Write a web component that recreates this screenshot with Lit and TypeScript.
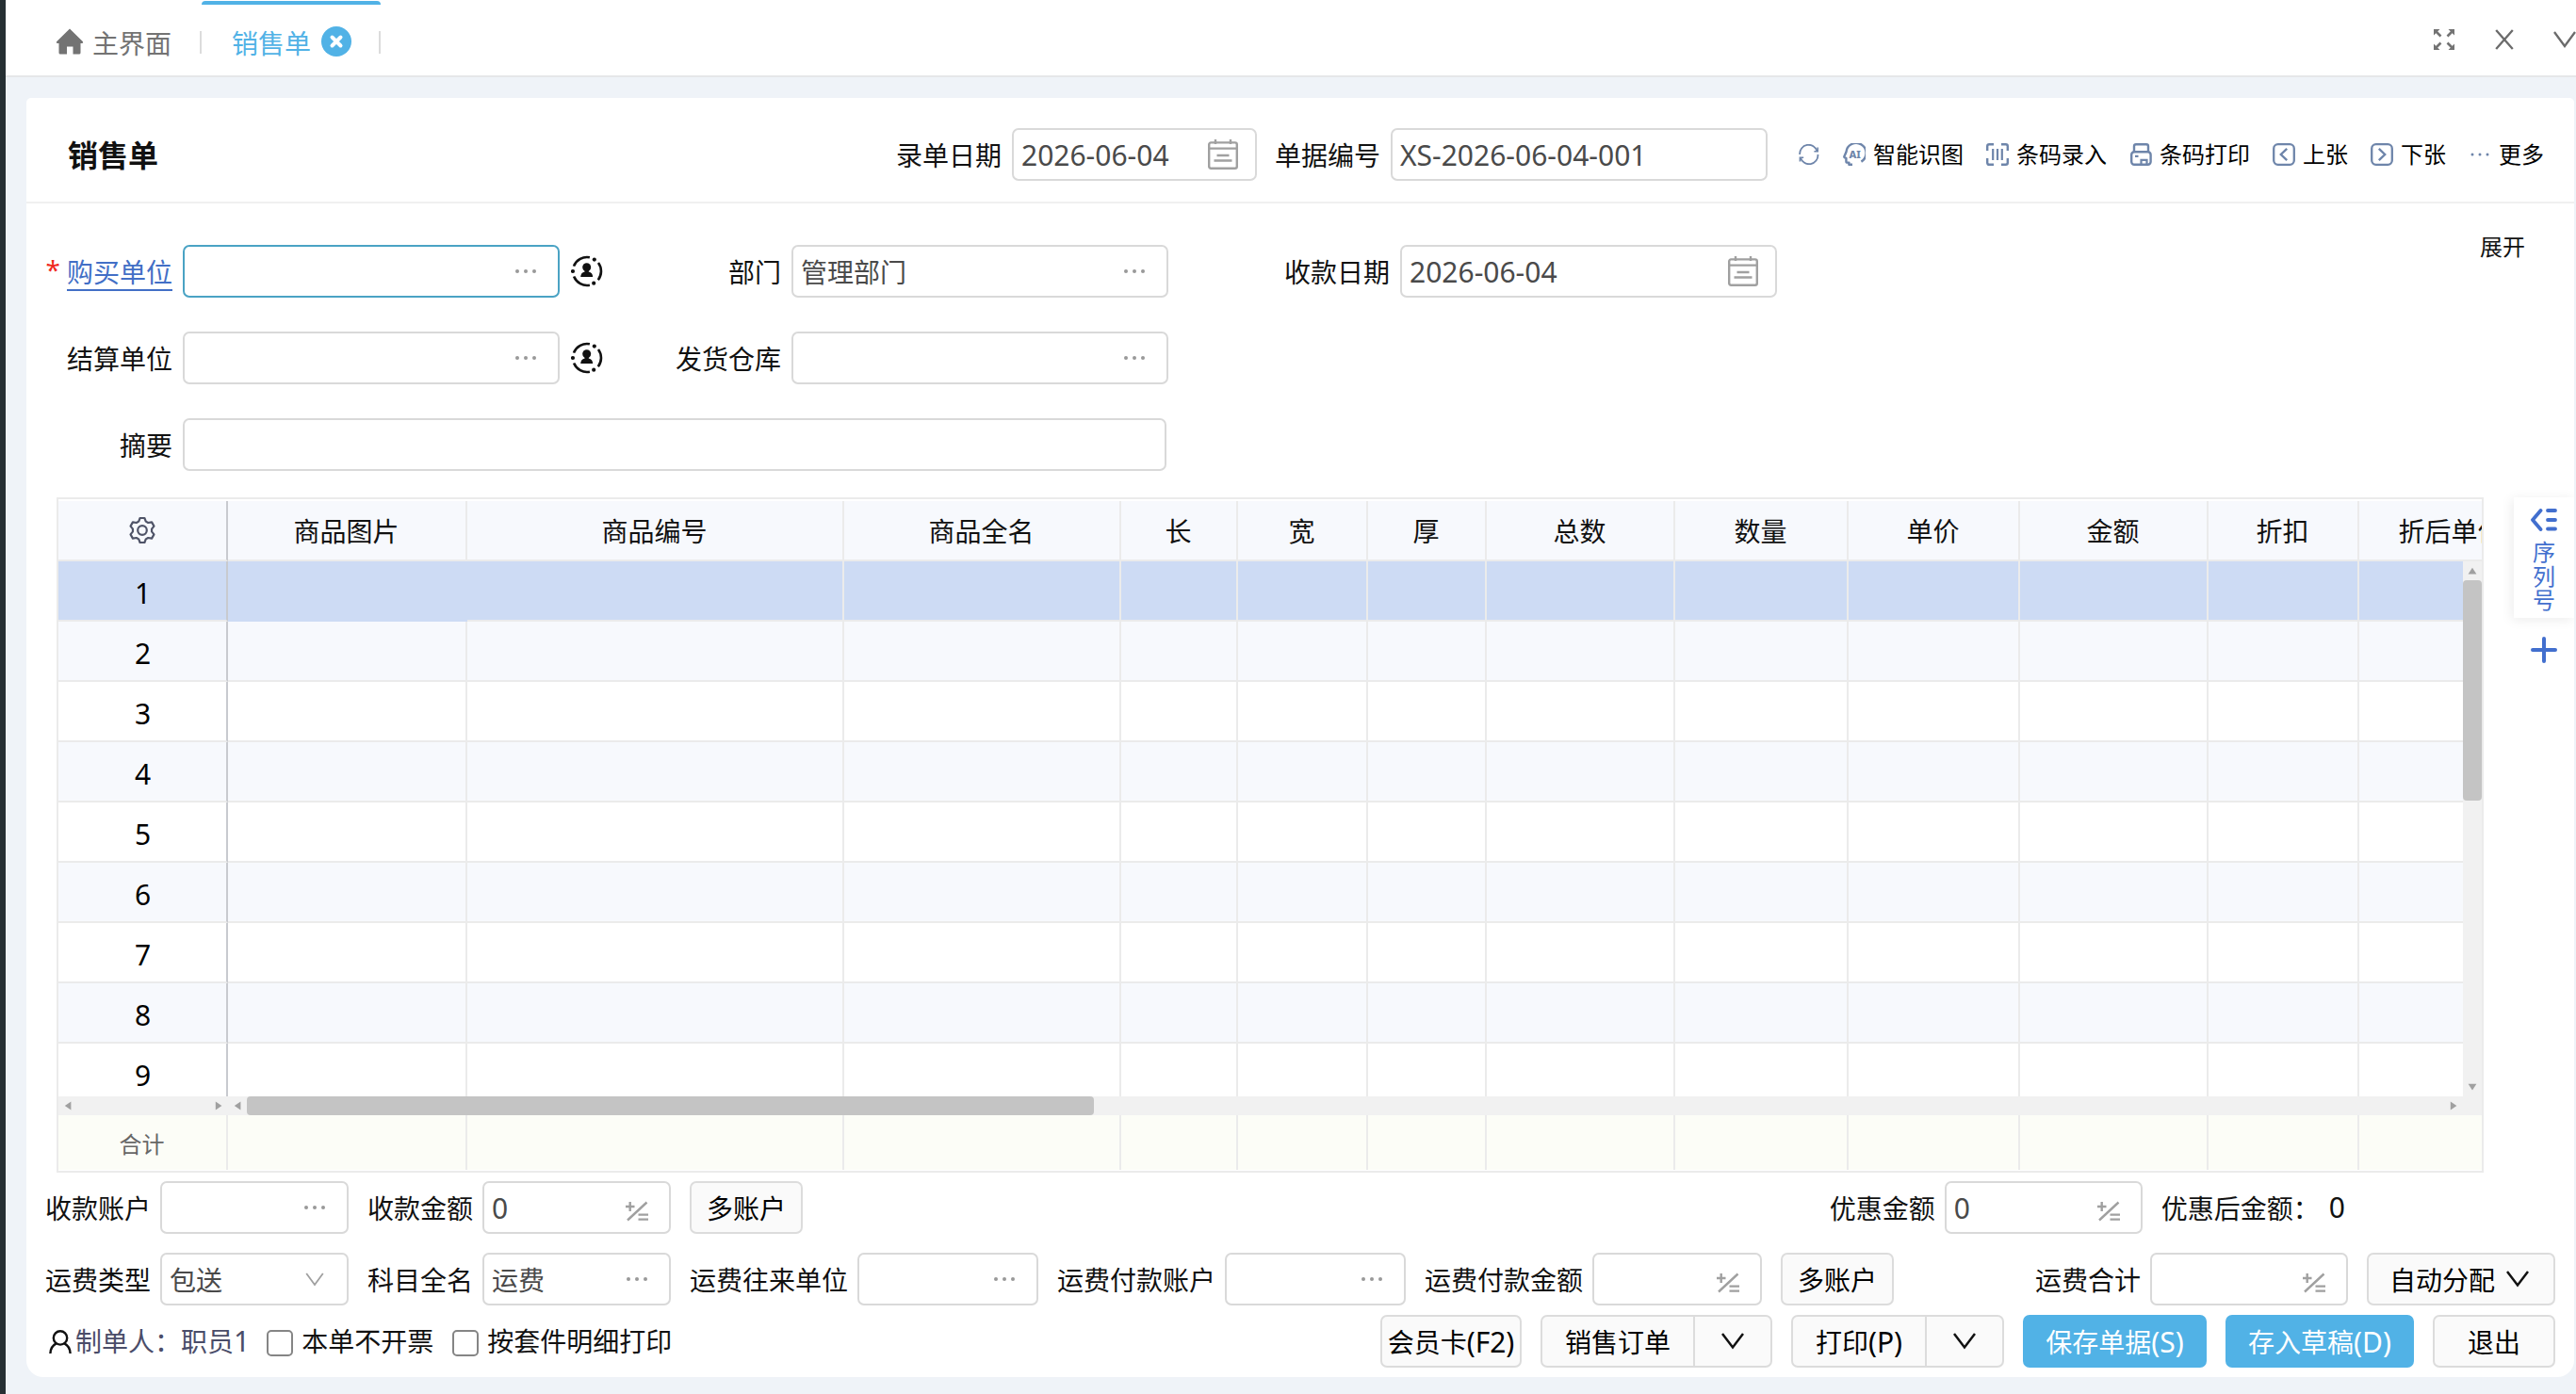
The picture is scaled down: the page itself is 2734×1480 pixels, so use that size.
import {LitElement, html, svg, css, nothing} from 'lit';
import type {TemplateResult} from 'lit';
import {customElement, property} from 'lit/decorators.js';
import {classMap} from 'lit/directives/class-map.js';
import {styleMap} from 'lit/directives/style-map.js';

const icon = (
  width: number,
  height: number,
  content: unknown,
  viewBox = `0 0 ${width} ${height}`
) => html`<svg width=${width} height=${height} viewBox=${viewBox} fill="none">
  ${content}
</svg>`;

const icons = {
  home: icon(
    30,
    28,
    svg`<path d="M15 0.5 29 14.2 Q29.8 16 28 16H26.5V26Q26.5 27.5 25 27.5H18.5V19.5H12V27.5H5Q3.5 27.5 3.5 26V16H2Q0.2 16 1 14.2Z" fill="#737373"/>`
  ),
  closeTab: icon(
    32,
    32,
    svg`<circle cx="16" cy="16" r="16" fill="#51b2e6"/>
      <path d="M11.5 11.5 20.5 20.5M20.5 11.5 11.5 20.5" stroke="#fff" stroke-width="4" stroke-linecap="round"/>`
  ),
  expand: icon(
    24,
    24,
    svg`<g fill="#737373" stroke="#737373">
      <path d="M3 3 8.5 8.5M21 3 15.5 8.5M3 21 8.5 15.5M21 21 15.5 15.5" stroke-width="2.6"/>
      <path d="M1 1H7.5L1 7.5ZM23 1V7.5L16.5 1ZM1 23V16.5L7.5 23ZM23 23H16.5L23 16.5Z" stroke="none"/>
    </g>`
  ),
  close: icon(
    22,
    22,
    svg`<path d="M2.2 1 19.8 21M19.8 1 2.2 21" stroke="#6b6b6b" stroke-width="2.3"/>`
  ),
  menu: icon(
    24,
    18,
    svg`<path d="M1 1 12 16 23 1" stroke="#6b6b6b" stroke-width="2.3"/>`
  ),
  refresh: icon(
    22,
    22,
    svg`<path d="M1.2 11A9.4 9.4 0 0 1 19.6 7.6M20.4 11A9.4 9.4 0 0 1 2 14.4" stroke="#6e85aa" stroke-width="1.8"/>
      <path d="M20.2 3.6V7.8H16.4M1.4 18.4V14.2H5.2" stroke="#6e85aa" stroke-width="1.6"/>`
  ),
  // head in profile with the letters inside
  ai: icon(
    24,
    24,
    svg`<path d="M19.4 19.6A10.6 10.6 0 1 0 3.4 9.6L1.3 14.2Q1.1 15.2 2.2 15.5L3.4 15.8V19.2Q3.4 20.6 4.8 20.6H6.4V22.7H10" stroke="#6e85aa" stroke-width="2.4" stroke-linejoin="round"/>
      <text x="12.6" y="16" text-anchor="middle" font-family="Noto Sans, sans-serif" font-size="11" font-weight="800" fill="#6e85aa">AI</text>`
  ),
  barcode: icon(
    24,
    24,
    svg`<path d="M8 1.2H3.2Q1.2 1.2 1.2 3.2V8M16 1.2H20.8Q22.8 1.2 22.8 3.2V8M8 22.8H3.2Q1.2 22.8 1.2 20.8V16M16 22.8H20.8Q22.8 22.8 22.8 20.8V16" stroke="#6e85aa" stroke-width="2.4"/>
      <path d="M7.2 6V18M12 6V18M16.8 6V18" stroke="#6e85aa" stroke-width="2.2"/>`
  ),
  printer: icon(
    24,
    24,
    svg`<path d="M5 9.5V3.2Q5 1.2 7 1.2H18Q20 1.2 20 3.2V9.5" stroke="#6e85aa" stroke-width="2.4"/>
      <rect x="2.2" y="9.2" width="20.4" height="13.6" rx="3" stroke="#6e85aa" stroke-width="2.4"/>
      <path d="M6 13.8H9.5M12.5 22V17.8H18.5V22" stroke="#6e85aa" stroke-width="2.2"/>`
  ),
  prev: icon(
    24,
    24,
    svg`<rect x="1.2" y="1.2" width="21.6" height="21.6" rx="4.5" stroke="#6e85aa" stroke-width="2.3"/>
      <path d="M15.2 5.8 8.8 12 15.2 18.2" stroke="#6e85aa" stroke-width="2.4"/>`
  ),
  next: icon(
    24,
    24,
    svg`<rect x="1.2" y="1.2" width="21.6" height="21.6" rx="4.5" stroke="#6e85aa" stroke-width="2.3"/>
      <path d="M8.8 5.8 15.2 12 8.8 18.2" stroke="#6e85aa" stroke-width="2.4"/>`
  ),
  more: icon(
    20,
    4,
    svg`<g fill="#6e85aa"><circle cx="2" cy="2" r="1.5"/><circle cx="10" cy="2" r="1.5"/><circle cx="18" cy="2" r="1.5"/></g>`
  ),
  contact: icon(
    34,
    34,
    svg`<path d="M-14-5.4A15 15 0 0 1 2.9-14.7M12-9A15 15 0 0 1 11.8 9.2M2.9 14.7A15 15 0 0 1-13.9 5.6" stroke="#111" stroke-width="2.6"/>
      <g fill="#111"><circle cx="-15" cy="0" r="2.1"/><circle cx="7.8" cy="-12.4" r="2.1"/><circle cx="7.2" cy="12.7" r="2.1"/>
      <circle cx="-.3" cy="-4.2" r="4.5"/>
      <path d="M-2.4-1H1.8V.6Q6 1.6 6.2 6H-6.8Q-6.6 1.6-2.4.6Z"/></g>`,
    '-17 -17 34 34'
  ),
  gear: icon(
    30,
    30,
    svg`<path d="M-2.4-13H2.4L3.8-9.4 6.24-7.99 10.06-8.58 12.46-4.42 10.04-1.41V1.41L12.46 4.42 10.06 8.58 6.24 7.99 3.8 9.4 2.4 13H-2.4L-3.8 9.4-6.24 7.99-10.06 8.58-12.46 4.42-10.04 1.41V-1.41L-12.46-4.42-10.06-8.58-6.24-7.99-3.8-9.4Z" stroke="#4f5468" stroke-width="2.2" stroke-linejoin="round"/>
      <circle r="4.8" stroke="#4f5468" stroke-width="2.2"/>`,
    '-15 -15 30 30'
  ),
  collapse: icon(
    28,
    24,
    svg`<path d="M10.5 2 2 12 10.5 22M18 2H26M18 12H26M18 21.5H26" stroke="#426fce" stroke-width="3.8" stroke-linecap="round" stroke-linejoin="round"/>`
  ),
  plus: icon(
    28,
    28,
    svg`<path d="M14 2V26M2 14H26" stroke="#426fce" stroke-width="4" stroke-linecap="round"/>`
  ),
  user: icon(
    24,
    25,
    svg`<path d="M1.4 25Q1.6 17.6 7.6 14.4M22.6 25Q22.4 17.6 16.4 14.4" stroke="#111" stroke-width="2.4"/>
      <circle cx="12" cy="8.4" r="7.2" stroke="#111" stroke-width="2.4"/>`
  ),
  chevron: icon(
    24,
    18,
    svg`<path d="M1 1 12 15.5 23 1" stroke="#111" stroke-width="2.5"/>`
  ),
};

const suffixes: Record<string, TemplateResult> = {
  dots: icon(
    24,
    6,
    svg`<g fill="#999"><circle cx="3" cy="3" r="2"/><circle cx="12" cy="3" r="2"/><circle cx="21" cy="3" r="2"/></g>`
  ),
  calendar: icon(
    32,
    32,
    svg`<rect x="1.2" y="3.4" width="29.6" height="27.4" rx="2" stroke="#a0a0a0" stroke-width="2.4"/>
      <path d="M1 9.6H31M8 0V5M24 0V5M9.5 17H22.5M6.5 22.5H25.5" stroke="#a0a0a0" stroke-width="2.4"/>`
  ),
  calc: icon(
    26,
    22,
    svg`<path d="M1 6H10.5M5.7 1V11M23.5 1.5 3 20.5M14.5 14.6H25M14.5 19.6H25" stroke="#a0a0a0" stroke-width="2.4"/>`
  ),
  select: icon(
    20,
    15,
    svg`<path d="M1.2 1 10 13 18.8 1" stroke="#a0a0a0" stroke-width="1.8"/>`
  ),
};

const arrows: Record<string, TemplateResult> = {
  up: icon(20, 20, svg`<path d="M5.6 13.4 10 6.8 14.4 13.4Z" fill="#a0a0a0"/>`),
  down: icon(20, 20, svg`<path d="M5.6 6.8 10 13.4 14.4 6.8Z" fill="#a0a0a0"/>`),
  left: icon(20, 20, svg`<path d="M13.4 5.6 6.8 10 13.4 14.4Z" fill="#a0a0a0"/>`),
  right: icon(20, 20, svg`<path d="M6.8 5.6 13.4 10 6.8 14.4Z" fill="#a0a0a0"/>`),
};

@customElement('bill-field')
export class BillField extends LitElement {
  @property() value = '';
  @property() suffix = '';
  @property({type: Boolean}) latin = false;
  @property({type: Boolean, reflect: true}) active = false;

  static styles = css`
    :host {
      background: #fff;
      border: 2px solid #d9d9d9;
      border-radius: 7px;
      box-sizing: border-box;
      color: #4a4a4a;
      display: flex;
      align-items: center;
      justify-content: space-between;
      height: 56px;
      padding: 0 34px 0 8px;
    }

    :host([active]) {
      border-color: #4aa3c4;
    }

    .value {
      line-height: 40px;
      padding-top: 2px;
      white-space: nowrap;
    }

    .latin {
      font-size: 30px;
      padding-top: 1px;
    }

    /* every suffix is centred 36px from the right edge of the box */
    .suffix {
      display: flex;
      justify-content: center;
      width: 0;
    }

    .suffix svg {
      flex: none;
    }

    .calc {
      padding-top: 8px;
    }
  `;

  render() {
    return html`
      <span class=${classMap({value: true, latin: this.latin})}
        >${this.value}</span
      >
      ${this.suffix
        ? html`<span
            class=${classMap({suffix: true, calc: this.suffix === 'calc'})}
            >${suffixes[this.suffix]}</span
          >`
        : nothing}
    `;
  }
}

interface Column {
  title: string;
  width: number;
}

const columns: Column[] = [
  {title: '商品图片', width: 254},
  {title: '商品编号', width: 400},
  {title: '商品全名', width: 294},
  {title: '长', width: 124},
  {title: '宽', width: 138},
  {title: '厚', width: 126},
  {title: '总数', width: 200},
  {title: '数量', width: 184},
  {title: '单价', width: 182},
  {title: '金额', width: 200},
  {title: '折扣', width: 160},
  {title: '折后单价', width: 198},
];

@customElement('bill-table')
export class BillTable extends LitElement {
  @property({type: Number}) rows = 9;
  @property({type: Number}) selected = 1;

  static styles = css`
    :host {
      border: 2px solid #ebebeb;
      box-sizing: border-box;
      display: flex;
      flex-direction: column;
      height: 717px;
      padding: 2px 0 1px;
      width: 2576px;
    }

    .row {
      display: flex;
      height: 64px;
      overflow: hidden;
    }

    .cell {
      align-items: center;
      border-bottom: 2px solid #ebebeb;
      border-right: 2px solid #ebebeb;
      box-sizing: border-box;
      display: flex;
      flex: none;
      justify-content: center;
      padding: 2px 1px 0 0;
      white-space: nowrap;
    }

    .fixed {
      border-right-color: #c8cacf;
      width: 180px;
    }

    .head {
      background: #f7f9fd;
      color: #111;
      flex: none;
    }

    .head .fixed {
      padding: 0;
    }

    .body {
      display: flex;
      height: 568px;
    }

    .lines {
      flex: 1;
      min-width: 0;
      overflow: hidden;
    }

    .lines .row {
      color: #000;
      font-size: 30px;
    }

    .lines .fixed {
      padding: 6px 0 0 1px;
    }

    .lines .row:nth-child(even) {
      background: #f7f9fd;
    }

    .lines .row.selected {
      background: #cddbf4;
    }

    .selected .fixed + .cell {
      border-color: #cddbf4;
    }

    .vbar,
    .hbar {
      background: #f1f1f1;
      display: flex;
      flex: none;
    }

    .vbar {
      flex-direction: column;
      justify-content: space-between;
      width: 20px;
    }

    .hbar {
      height: 20px;
    }

    .track {
      display: flex;
      flex: 1;
    }

    .thumb {
      background: #c4c4c4;
      border-radius: 4px;
    }

    .vbar .thumb {
      height: 234px;
      width: 20px;
    }

    .hbar .thumb {
      height: 20px;
      width: 899px;
    }

    .pinned {
      display: flex;
      justify-content: space-between;
      width: 180px;
    }

    .corner {
      width: 20px;
    }

    .foot {
      background: #fcfdf7;
      color: #666;
      font-size: 24px;
      height: 58px;
    }

    .foot .cell {
      border-bottom: 0;
      border-right-color: #ebebeb;
      padding-top: 3px;
    }
  `;

  private renderCells(text: (column: Column) => string) {
    return columns.map(
      column => html`<div
        class="cell"
        style=${styleMap({width: `${column.width}px`})}
      >
        ${text(column)}
      </div>`
    );
  }

  render() {
    const numbers = Array.from({length: this.rows}, (_, i) => i + 1);
    return html`
      <div class="row head">
        <div class="cell fixed">${icons.gear}</div>
        ${this.renderCells(column => column.title)}
      </div>
      <div class="body">
        <div class="lines">
          ${numbers.map(
            n => html`<div
              class=${classMap({row: true, selected: n === this.selected})}
            >
              <div class="cell fixed">${n}</div>
              ${this.renderCells(() => '')}
            </div>`
          )}
        </div>
        <div class="vbar">
          ${arrows.up}
          <div class="track"><div class="thumb"></div></div>
          ${arrows.down}
        </div>
      </div>
      <div class="hbar">
        <div class="pinned">${arrows.left}${arrows.right}</div>
        ${arrows.left}
        <div class="track"><div class="thumb"></div></div>
        ${arrows.right}
        <div class="corner"></div>
      </div>
      <div class="row foot">
        <div class="cell fixed">合计</div>
        ${this.renderCells(() => '')}
      </div>
    `;
  }
}

@customElement('app-root')
export class AppRoot extends LitElement {
  static styles = css`
    :host {
      background: #eff3f8;
      border-left: 6px solid #262f33;
      box-sizing: border-box;
      color: #111;
      display: flex;
      flex-direction: column;
      font-family: 'Noto Sans', 'Noto Sans CJK SC', sans-serif;
      font-size: 28px;
      height: 1480px;
      line-height: 40px;
      overflow: hidden;
      white-space: nowrap;
      width: 2734px;
    }

    svg {
      display: block;
      flex: none;
    }

    .latin {
      font-size: 30px;
    }

    /* tabs */
    .tabs {
      align-items: center;
      background: #fff;
      border-bottom: 2px solid #e6e7e9;
      box-sizing: border-box;
      color: #737373;
      display: flex;
      flex: none;
      height: 82px;
    }

    .tab {
      align-items: center;
      box-sizing: border-box;
      display: flex;
      height: 82px;
      padding-top: 8px;
    }

    .tab span {
      padding-top: 3px;
    }

    .tab.home {
      gap: 9px;
      padding-left: 53px;
      width: 208px;
    }

    .tab.current {
      color: #51b2e6;
      gap: 11px;
      padding-left: 32px;
      position: relative;
      width: 190px;
    }

    .tab.current::before {
      background: #51b2e6;
      border-radius: 4px 4px 0 0;
      content: '';
      height: 4px;
      left: 0;
      position: absolute;
      right: 0;
      top: 2px;
    }

    .tab svg {
      margin-bottom: 1px;
    }

    .divider {
      background: #dcdcdc;
      height: 24px;
      margin: 10px 0 0 -2px;
      width: 2px;
    }

    .window {
      align-items: center;
      display: flex;
      gap: 41px;
      margin-left: auto;
      padding-top: 4px;
    }

    /* card */
    .card {
      background: #fff;
      border-radius: 5px 5px 18px 18px;
      display: flex;
      flex-direction: column;
      height: 1358px;
      margin: 22px 2px 0 22px;
    }

    .header {
      align-items: center;
      border-bottom: 2px solid #f0f0f0;
      box-sizing: border-box;
      display: flex;
      height: 112px;
      padding: 10px 32px 0 44px;
    }

    .title {
      font-size: 32px;
      font-weight: 700;
      margin-right: auto;
      padding-top: 2px;
    }

    .label {
      padding-top: 2px;
    }

    .header .label {
      margin: 0 11px 0 -1px;
    }

    .header bill-field {
      margin-right: 20px;
    }

    .tools {
      align-items: center;
      color: #000;
      display: flex;
      font-size: 24px;
      margin-left: 13px;
    }

    .tool {
      align-items: center;
      display: flex;
      gap: 8px;
      margin-left: 24px;
    }

    .tool:first-of-type {
      margin-left: 25px;
    }

    .tool.last {
      gap: 10px;
      margin-left: 26px;
    }

    .w192 {
      width: 192px;
    }

    .w180 {
      width: 180px;
    }

    .w200 {
      width: 200px;
    }

    .w210 {
      width: 210px;
    }

    .w260 {
      width: 260px;
    }

    .w400 {
      width: 400px;
    }

    /* form */
    .form {
      align-items: center;
      display: grid;
      grid-template-columns: 166px 400px 246px 400px 246px 400px 1fr;
      grid-template-rows: repeat(3, 56px);
      padding: 44px 0 28px;
      row-gap: 36px;
    }

    .form .label {
      align-items: center;
      display: flex;
      justify-content: flex-end;
      padding-right: 11px;
    }

    .form .label svg {
      margin: 0 auto 2px 12px;
    }

    .star {
      color: #f0281e;
      font-size: 28px;
      margin: -6px 7px 0 0;
    }

    .link {
      border-bottom: 2px solid #426fc6;
      color: #426fc6;
      line-height: 36px;
      margin-top: 2px;
    }

    .summary {
      grid-column: 2 / 5;
      width: 1044px;
    }

    .toggle {
      align-self: start;
      font-size: 24px;
      justify-self: end;
      line-height: 28px;
      margin: -12px 52px 0 0;
    }

    /* table */
    .detail {
      display: flex;
      justify-content: space-between;
      padding-left: 32px;
    }

    .side {
      align-items: center;
      display: flex;
      flex-direction: column;
      gap: 20px;
    }

    .serial {
      align-items: center;
      box-shadow: -2px 2px 12px rgba(0, 0, 0, 0.08);
      box-sizing: border-box;
      clip-path: inset(-12px 0 -16px -16px);
      color: #426fce;
      display: flex;
      flex-direction: column;
      font-size: 24px;
      height: 128px;
      line-height: 25.6px;
      padding-top: 12px;
      width: 64px;
    }

    .serial div {
      margin-top: 9px;
      text-align: center;
      white-space: normal;
      width: 24px;
    }

    /* bottom bar */
    .bar {
      align-items: center;
      display: flex;
      gap: 20px;
      height: 56px;
      padding: 0 20px;
    }

    .settle {
      margin-top: 9px;
    }

    .freight {
      margin: 20px 0 10px;
    }

    .pair {
      align-items: center;
      display: flex;
      gap: 10px;
    }

    .push {
      margin-left: auto;
    }

    .after {
      margin-right: 223px;
    }

    .button {
      align-items: center;
      background: #fafafa;
      border: 2px solid #dcdcdc;
      border-radius: 7px;
      box-sizing: border-box;
      color: #000;
      display: flex;
      gap: 12px;
      height: 56px;
      justify-content: center;
    }

    .button > span {
      padding-top: 2px;
    }

    .accounts {
      width: 120px;
    }

    .auto {
      padding-right: 4px;
      width: 200px;
    }

    .card-button {
      width: 150px;
    }

    .split {
      gap: 0;
      justify-content: stretch;
    }

    .split > span {
      flex: 1;
      text-align: center;
    }

    .arrow {
      align-items: center;
      border-left: 2px solid #dcdcdc;
      display: flex;
      height: 52px;
      justify-content: center;
      width: 80px;
    }

    .order {
      width: 246px;
    }

    .print {
      width: 226px;
    }

    .primary {
      background: #51b2e6;
      border-color: #51b2e6;
      color: #fff;
    }

    .save {
      width: 195px;
    }

    .draft {
      width: 200px;
    }

    .exit {
      width: 130px;
    }

    .maker {
      align-items: center;
      color: #4a4d69;
      display: flex;
      gap: 4px;
      margin-right: -2px;
      padding-left: 4px;
    }

    .check {
      align-items: center;
      display: flex;
      gap: 9px;
    }

    .box {
      border: 2px solid #858585;
      border-radius: 5px;
      box-sizing: border-box;
      height: 28px;
      margin-top: 4px;
      width: 28px;
    }
  `;

  private renderTool(glyph: TemplateResult, text: string) {
    return html`<div class="tool">${glyph}<span>${text}</span></div>`;
  }

  private renderPair(
    label: string,
    width: string,
    suffix: string,
    value = '',
    latin = false
  ) {
    return html`<div class="pair">
      <span class="label">${label}</span>
      <bill-field
        class=${width}
        suffix=${suffix}
        value=${value}
        ?latin=${latin}
      ></bill-field>
    </div>`;
  }

  private renderTabs() {
    return html`<div class="tabs">
      <div class="tab home">${icons.home}<span>主界面</span></div>
      <div class="divider"></div>
      <div class="tab current"><span>销售单</span>${icons.closeTab}</div>
      <div class="divider"></div>
      <div class="window">${icons.expand}${icons.close}${icons.menu}</div>
    </div>`;
  }

  private renderHeader() {
    return html`<div class="header">
      <span class="title">销售单</span>
      <span class="label">录单日期</span>
      <bill-field
        class="w260"
        suffix="calendar"
        value="2026-06-04"
        latin
      ></bill-field>
      <span class="label">单据编号</span>
      <bill-field class="w400" value="XS-2026-06-04-001" latin></bill-field>
      <div class="tools">
        ${icons.refresh} ${this.renderTool(icons.ai, '智能识图')}
        ${this.renderTool(icons.barcode, '条码录入')}
        ${this.renderTool(icons.printer, '条码打印')}
        ${this.renderTool(icons.prev, '上张')}
        ${this.renderTool(icons.next, '下张')}
        <div class="tool last">${icons.more}<span>更多</span></div>
      </div>
    </div>`;
  }

  private renderForm() {
    return html`<div class="form">
      <div class="label">
        <span class="star">*</span><span class="link">购买单位</span>
      </div>
      <bill-field suffix="dots" active></bill-field>
      <div class="label">${icons.contact}<span>部门</span></div>
      <bill-field suffix="dots" value="管理部门"></bill-field>
      <div class="label">收款日期</div>
      <bill-field suffix="calendar" value="2026-06-04" latin></bill-field>
      <div class="toggle">展开</div>

      <div class="label">结算单位</div>
      <bill-field suffix="dots"></bill-field>
      <div class="label">${icons.contact}<span>发货仓库</span></div>
      <bill-field suffix="dots"></bill-field>
      <div></div>
      <div></div>
      <div></div>

      <div class="label">摘要</div>
      <bill-field class="summary"></bill-field>
    </div>`;
  }

  private renderSplit(name: string, text: unknown) {
    return html`<div class="button split ${name}">
      <span>${text}</span>
      <div class="arrow">${icons.chevron}</div>
    </div>`;
  }

  private renderBottom() {
    const key = (text: string) => html`<span class="latin">${text}</span>`;
    return html`
      <div class="bar settle">
        ${this.renderPair('收款账户', 'w200', 'dots')}
        ${this.renderPair('收款金额', 'w200', 'calc', '0', true)}
        <div class="button accounts"><span>多账户</span></div>
        <div class="push">
          ${this.renderPair('优惠金额', 'w210', 'calc', '0', true)}
        </div>
        <div class="pair after">
          <span class="label">优惠后金额：</span>
          <span class="latin">0</span>
        </div>
      </div>
      <div class="bar freight">
        ${this.renderPair('运费类型', 'w200', 'select', '包送')}
        ${this.renderPair('科目全名', 'w200', 'dots', '运费')}
        ${this.renderPair('运费往来单位', 'w192', 'dots')}
        ${this.renderPair('运费付款账户', 'w192', 'dots')}
        ${this.renderPair('运费付款金额', 'w180', 'calc')}
        <div class="button accounts"><span>多账户</span></div>
        <div class="push">${this.renderPair('运费合计', 'w210', 'calc')}</div>
        <div class="button auto"><span>自动分配</span>${icons.chevron}</div>
      </div>
      <div class="bar">
        <div class="maker">
          ${icons.user}<span>制单人：职员${key('1')}</span>
        </div>
        <div class="check"><i class="box"></i><span>本单不开票</span></div>
        <div class="check"><i class="box"></i><span>按套件明细打印</span></div>
        <div class="button card-button push"><span>会员卡${key('(F2)')}</span></div>
        ${this.renderSplit('order', '销售订单')}
        ${this.renderSplit('print', html`打印${key('(P)')}`)}
        <div class="button primary save"><span>保存单据${key('(S)')}</span></div>
        <div class="button primary draft">
          <span>存入草稿${key('(D)')}</span>
        </div>
        <div class="button exit"><span>退出</span></div>
      </div>
    `;
  }

  render() {
    return html`
      ${this.renderTabs()}
      <div class="card">
        ${this.renderHeader()} ${this.renderForm()}
        <div class="detail">
          <bill-table></bill-table>
          <div class="side">
            <div class="serial">
              ${icons.collapse}
              <div>序列号</div>
            </div>
            ${icons.plus}
          </div>
        </div>
        ${this.renderBottom()}
      </div>
    `;
  }
}
